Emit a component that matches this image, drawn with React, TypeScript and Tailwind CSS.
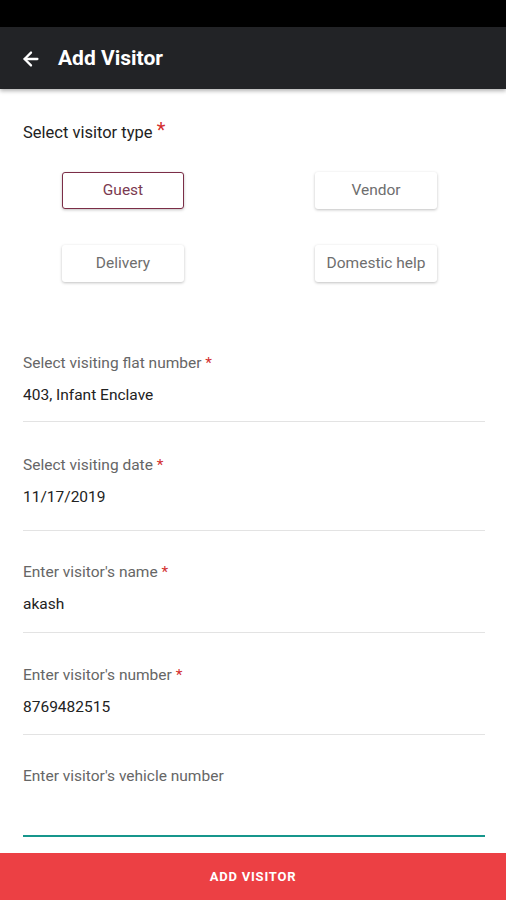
import { ArrowLeft } from 'lucide-react';

// per-field spacing taken from the screenshot
const fields = [
  { label: 'Select visiting flat number', value: '403, Infant Enclave', top: 'mt-0', gap: 'mt-[16px]' },
  { label: 'Select visiting date', value: '11/17/2019', top: 'mt-[33px]', gap: 'mt-[23px]' },
  { label: "Enter visitor's name", value: 'akash', top: 'mt-[31px]', gap: 'mt-[18px]' },
  { label: "Enter visitor's number", value: '8769482515', top: 'mt-[32px]', gap: 'mt-[17px]' },
];

const typeBtn =
  'w-[122px] h-[37px] flex items-center justify-center rounded-[3px] bg-white text-[15.5px] shadow-[0_1px_3px_rgba(0,0,0,0.25)]';

export default function App() {
  return (
    <div
      className="h-[900px] w-full flex flex-col bg-white overflow-hidden"
      style={{ fontFamily: 'Roboto, "Noto Sans", sans-serif' }}
    >
      {/* status bar */}
      <div className="h-[27px] bg-black shrink-0" />

      {/* app bar */}
      <div className="h-[62px] shrink-0 bg-[#222326] flex items-center pl-[20px] pt-[2px] gap-[16px] shadow-[0_2px_4px_rgba(0,0,0,0.3)] relative z-10">
        <ArrowLeft className="w-[22px] h-[22px] text-white" strokeWidth={2.5} />
        <span className="text-white text-[21px] font-bold">Add Visitor</span>
      </div>

      {/* form */}
      <div className="flex-1 flex flex-col">
        <div className="pt-[34px] pl-[23px] text-[16.5px] leading-[20px] text-[#222]">
          Select visitor type <span className="text-[#d32f2f] text-[20px] align-top relative -top-[3px]">*</span>
        </div>

        <div className="mt-[29px] flex justify-between pl-[62px] pr-[69px]">
          <div className={`${typeBtn} border border-[#7b2d47] text-[#7b3a50] shadow-[0_1px_2px_rgba(0,0,0,0.35)]`}>
            Guest
          </div>
          <div className={`${typeBtn} text-[#6e6e6e]`}>Vendor</div>
        </div>
        <div className="mt-[36px] flex justify-between pl-[62px] pr-[69px]">
          <div className={`${typeBtn} text-[#6e6e6e]`}>Delivery</div>
          <div className={`${typeBtn} text-[#6e6e6e]`}>Domestic help</div>
        </div>

        <div className="mt-[71px] px-[23px] flex flex-col">
          {fields.map(f => (
            <div key={f.label} className={f.top}>
              <div className="text-[15.5px] leading-[20px] text-[#666]">
                {f.label} <span className="text-[#d32f2f]">*</span>
              </div>
              <div className="mt-[12px] text-[15.5px] leading-[20px] text-[#222]">{f.value}</div>
              <div className={`${f.gap} h-px bg-[#e3e3e3] w-[462px]`} />
            </div>
          ))}

          <div className="mt-[31px]">
            <div className="text-[15.5px] leading-[20px] text-[#666]">Enter visitor's vehicle number</div>
            <div className="mt-[49px] h-[2px] bg-[#16968c] w-[462px]" />
          </div>
        </div>
      </div>

      {/* bottom action */}
      <div className="h-[47px] shrink-0 bg-[#ec4044] flex items-center justify-center">
        <span className="text-white text-[13px] font-bold tracking-[0.8px]">ADD VISITOR</span>
      </div>
    </div>
  );
}
